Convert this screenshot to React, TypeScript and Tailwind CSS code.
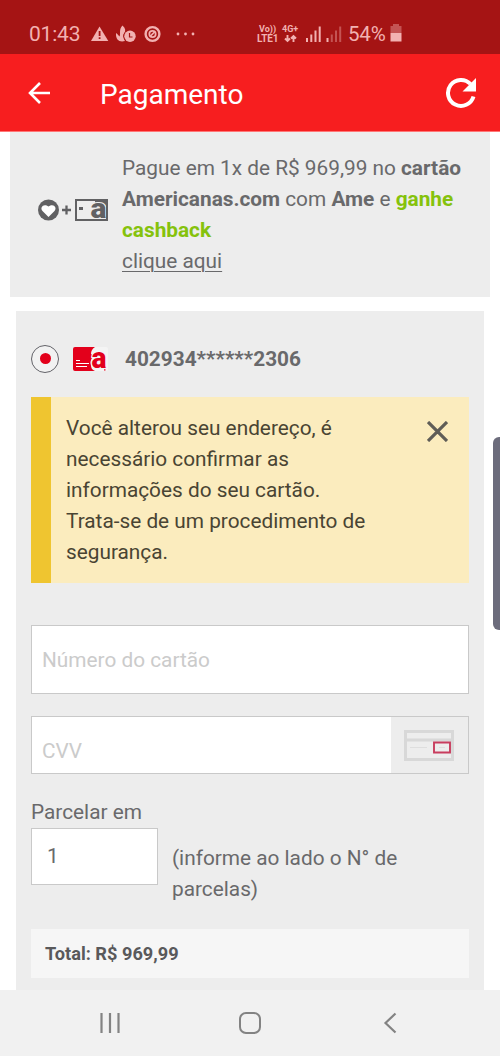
import React from "react";

function StatusBar() {
  return (
    <div className="flex h-[54px] shrink-0 items-center bg-[#a51414] pt-[13px] pl-[29px] text-[#f2b1b1]">
      <span className="w-[62px] whitespace-nowrap text-[21px] leading-[24px] tracking-[-0.2px]">01:43</span>
      <svg className="h-[20px] w-[110px]" viewBox="0 0 110 20" fill="currentColor">
        <path d="M8.500 2.500 17.300 17H0Z" />
        <path d="M7.700 7h1.800v5H7.700zM7.700 13.300h1.800V15H7.700z" fill="#a51414" />
        <path d="M31.500 1.500c3 2.500 3.500 5.500 1.500 8-1.500 2-.5 4 1 7.500-5 1.500-9.500-.5-9-8 2 1.500 2.500 2.500 3.500 3.500C30 10 27.500 5.500 31.500 1.500Z" />
        <circle cx="39" cy="12.300" r="6.600" fill="#a51414" />
        <circle cx="39" cy="12.300" r="5.700" />
        <path d="M38.500 9v4h3" fill="none" stroke="#a51414" strokeWidth="1.200" />
        <circle cx="61.500" cy="10" r="6.900" fill="none" stroke="currentColor" strokeWidth="2.400" />
        <circle cx="61.500" cy="10" r="3.200" fill="none" stroke="currentColor" strokeWidth="1.700" />
        <path d="m59 12.500 5-5" stroke="currentColor" strokeWidth="1.700" />
        <circle cx="87" cy="10" r="1.400" /><circle cx="94.500" cy="10" r="1.400" /><circle cx="102" cy="10" r="1.400" />
      </svg>
      <div className="ml-[56px] w-[25px] text-[9px] leading-[9px] font-bold">
        <div className="pl-[2px]">Vo))</div>
        <div className="text-[10px] tracking-[-0.1px]">LTE1</div>
      </div>
      <div className="flex w-[24px] flex-col items-start text-[9px] leading-[9px] font-bold">
        <span>4G+</span>
        <svg className="ml-[2px] h-[9px] w-[13px]" viewBox="0 0 13 9" fill="none" stroke="currentColor" strokeWidth="1.900"><path d="M3.500 1v6M1 4.500 3.500 7 6 4.500M9.500 8V2M7 4.500 9.500 2 12 4.500" /></svg>
      </div>
      <svg className="h-[18px] w-[37px]" viewBox="0 0 37 18" fill="currentColor">
        <path d="M0 13h2v4H0zM4.300 9.500h2V17h-2zM8.500 5.500h2V17h-2zM12.700 1.500h2V17h-2zM20.500 13h2v4h-2z" />
        <path d="M24.800 9.500h2V17h-2zM29 5.500h2V17h-2zM33.200 1.500h2V17h-2z" opacity=".4" />
      </svg>
      <span className="ml-[5px] w-[42px] whitespace-nowrap text-[20.500px] leading-[24px] tracking-[-0.2px]">54%</span>
      <svg className="mb-[1px] h-[18px] w-[12px]" viewBox="0 0 12 18" fill="currentColor">
        <path d="M3 0h6v2h2.500v7H.5V2H3Z" opacity=".4" /><path d="M.5 9h11v8.500H.5z" />
      </svg>
    </div>
  );
}

function TopBar() {
  return (
    <header className="flex h-[78px] shrink-0 items-center border-b border-[#f77] bg-[#f71e1f] pl-[28px] text-white">
      <svg className="h-[22px] w-[23px]" viewBox="0 0 23 22" fill="none" stroke="currentColor" strokeWidth="2.600"><path d="M12 1 2 11l10 10M1.500 11H22" /></svg>
      <h1 className="ml-[49px] w-[345px] pt-[4px] text-[28px] leading-[34px] font-normal">Pagamento</h1>
      <svg className="h-[32px] w-[32px]" viewBox="0 0 32 32">
        <path d="M28.500 19.500A13 13 0 1 1 25.500 7" fill="none" stroke="currentColor" strokeWidth="4" />
        <path d="M31 1v13.500H17.500Z" fill="currentColor" />
      </svg>
    </header>
  );
}

function CashbackOffer() {
  return (
    <section className="mx-[10px] flex h-[165px] shrink-0 bg-[#ededed] pl-[28px]">
      <div className="mt-[67px] flex h-[22px] w-[84px] items-center text-[#616163]">
        <svg className="h-[22px] w-[21px]" viewBox="0 0 21 22"><circle cx="10.500" cy="11" r="10.500" fill="currentColor" /><path d="M10.500 18 4.500 12C1.500 8.500 5.500 4 10.500 7.500 15.500 4 19.500 8.500 16.500 12Z" fill="#fff" /></svg>
        <svg className="ml-[3px] h-[10px] w-[9px]" viewBox="0 0 9 10" stroke="currentColor" strokeWidth="2.300"><path d="M0 5h9M4.500.5v9" /></svg>
        <svg className="ml-[4px] h-[22px] w-[33px] overflow-visible" viewBox="0 0 33 22" fill="currentColor">
          <path d="M1 1h31v20H1z" fill="#ededed" stroke="currentColor" strokeWidth="2" />
          <path d="M4 8h4v3H4zM27 1h5v20h-5zM20 1h12v3H20z" />
          <text x="15.500" y="19" fontFamily="Roboto" fontWeight="900" fontSize="27" textLength="16" lengthAdjust="spacingAndGlyphs" stroke="#ededed" strokeWidth="2.200" paintOrder="stroke">a</text>
          <path d="M0 20h33v2H0zM31 0h2v22h-2z" />
        </svg>
      </div>
      <p className="mt-[21px] w-[364px] whitespace-nowrap text-[20.800px] leading-[31px] text-[#69696b]">
        Pague em 1x de R$ 969,99 no <b>cartão</b><br />
        <b>Americanas.com</b> com <b>Ame</b> e <b className="text-[#85c20c]">ganhe<br />cashback</b><br />
        <a className="underline decoration-1 underline-offset-[3px]">clique aqui</a>
      </p>
    </section>
  );
}

function Notice() {
  return (
    <div className="mt-[24px] flex h-[186px] border-l-[20px] border-[#efc530] bg-[#fbecbe] pl-[15px] text-[#494433]">
      <p className="mt-[16px] w-[361px] shrink-0 text-[20.800px] leading-[31px]">
        Você alterou seu endereço, é<br />necessário confirmar as<br />informações do seu cartão.<br />Trata-se de um procedimento de<br />segurança.
      </p>
      <svg className="mt-[24px] h-[21px] w-[21px] shrink-0 text-[#5f5d57]" viewBox="0 0 21 21" fill="none" stroke="currentColor" strokeWidth="3.200"><path d="m1 1 19 19M20 1 1 20" /></svg>
    </div>
  );
}

function CardForm() {
  return (
    <section className="mx-[16px] mt-[14px] h-[679px] shrink-0 bg-[#ededed] px-[15px] pt-[33px] text-[20.800px] text-[#69696b]">
      <div className="flex h-[29px] items-center">
        <div className="flex h-[28px] w-[28px] items-center justify-center rounded-full border border-[#636369] bg-[#f2f2f2]"><span className="h-[11px] w-[11px] rounded-full bg-[#e3001b]" /></div>
        <svg className="ml-[14px] h-[24px] w-[36px] overflow-visible" viewBox="0 0 36 24">
          <rect width="35" height="24" rx="2" fill="#f4f4f4" />
          <path d="M2 0h20c-3 2-4 4-4 7l4 2c-4 2-5 5-4 9 0 3 1 5 4 6H2q-2 0-2-2V2Q0 0 2 0Z" fill="#e3001b" />
          <path d="M3 13.500h4M3 16.500h13M3 19.500h11" fill="none" stroke="#fff" />
          <path d="M31 22h1.500v1.500H31z" fill="#e3001b" />
          <text x="18.500" y="20.500" fontFamily="Roboto" fontWeight="900" fontSize="29" textLength="15" lengthAdjust="spacingAndGlyphs" fill="#e3001b" stroke="#f4f4f4" strokeWidth="2.500" paintOrder="stroke">a</text>
        </svg>
        <b className="ml-[16px] pt-[3px]">402934******2306</b>
      </div>
      <Notice />
      <div className="mt-[42px] flex h-[69px] items-center border border-[#c9c9c9] bg-white pt-[2px] pl-[10px] text-[#cbcbcb]">Número do cartão</div>
      <div className="mt-[22px] flex h-[58px] border border-[#c9c9c9] bg-white">
        <span className="flex flex-1 items-center pt-[14px] pl-[10px] text-[#cbcbcb]">CVV</span>
        <div className="flex w-[77px] items-center bg-[#ededed] pl-[13px]">
          <svg className="h-[31px] w-[50px]" viewBox="0 0 50 31" fill="none">
            <path d="M1.500 1.500h47v28h-47zM2 10h46" stroke="#d8d8d8" strokeWidth="3" /><path d="M6 17.500h17M35 17.500h8" stroke="#dedede" />
            <path d="M30 12.500h16v10H30z" fill="#ededed" stroke="#c83d5e" strokeWidth="1.900" /><path d="M35 17.500h6" stroke="#dedede" />
          </svg>
        </div>
      </div>
      <div className="mt-[23px] h-[31px] leading-[31px]">Parcelar em</div>
      <div className="flex h-[76px]">
        <div className="flex h-[57px] w-[127px] items-center border border-[#c9c9c9] bg-white pl-[15px]">1</div>
        <p className="mt-[15px] ml-[14px] leading-[31px]">(informe ao lado o N° de<br />parcelas)</p>
      </div>
      <div className="mt-[25px] flex h-[49px] items-center bg-[#f6f6f6] pl-[14px] text-[18.200px] font-bold text-[#59595b]">Total: R$ 969,99</div>
    </section>
  );
}

function NavigationBar() {
  return (
    <nav className="flex h-[66px] shrink-0 items-center bg-[#f1f1f1] pl-[100px] text-[#838383]">
      <svg className="h-[22px] w-[21px]" viewBox="0 0 21 22" stroke="currentColor" strokeWidth="2.200"><path d="M1.500 1v20M10 1v20M18.500 1v20" /></svg>
      <div className="ml-[118px] h-[22px] w-[22px] rounded-[7px] border-2 border-current" />
      <svg className="ml-[122px] h-[22px] w-[14px]" viewBox="0 0 14 22" fill="none" stroke="currentColor" strokeWidth="2.200"><path d="M12.500 1.500 2.500 11l10 9.500" /></svg>
    </nav>
  );
}

export default function App() {
  return (
    <div className="relative flex h-[1056px] w-[500px] flex-col overflow-hidden bg-white font-['Roboto',sans-serif]">
      <StatusBar />
      <TopBar />
      <CashbackOffer />
      <CardForm />
      <NavigationBar />
      <div className="absolute top-[437px] right-0 h-[193px] w-[7px] rounded-l-[6px] bg-[#6c6c7c]" />
    </div>
  );
}
